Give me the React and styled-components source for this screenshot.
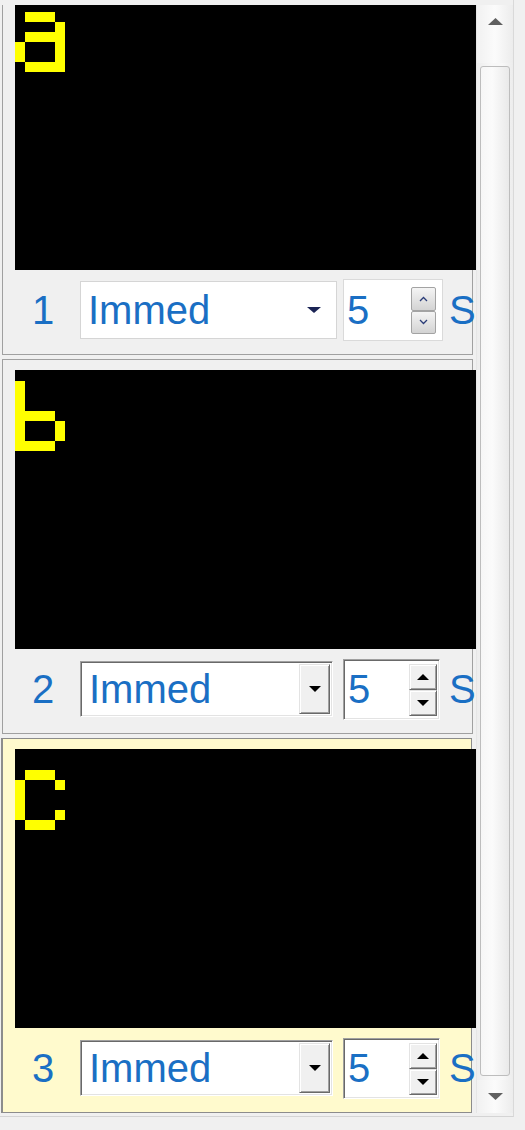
import React, { useLayoutEffect, useRef } from 'react';
import styled, { createGlobalStyle, css } from 'styled-components';

const GlobalStyle = createGlobalStyle`
  html, body {
    margin: 0;
    padding: 0;
    background: #f0f0f0;
  }
  body {
    font-family: "Liberation Sans", Arial, sans-serif;
  }
`;

const sunken = css`
  border: 1px solid;
  border-color: #a0a0a0 #ffffff #ffffff #a0a0a0;
  box-shadow: inset 1px 1px 0 #696969, inset -1px -1px 0 #e3e3e3;
`;

const raised = css`
  border: 1px solid;
  border-color: #e3e3e3 #696969 #696969 #e3e3e3;
  box-shadow: inset 1px 1px 0 #ffffff, inset -1px -1px 0 #a0a0a0;
`;

const Styles = {
  Frame: styled.div`
    display: flex;
    width: 514px;
    height: 1117px;
    box-sizing: border-box;
    padding: 5px 0 3px 0;
    border-right: 1px solid #d9d9d9;
    border-bottom: 1px solid #d4d4d4;
    background: #f0f0f0;
  `,
  Viewport: styled.div`
    width: 476px;
    height: 100%;
    overflow: hidden;
    flex-shrink: 0;
  `,
  PanelList: styled.div`
    display: flex;
    flex-direction: column;
    gap: 4px;
    padding: 0 0 3px 2px;
  `,
  Panel: styled.div`
    width: 471px;
    box-sizing: border-box;
    padding: 10px 0 13px 12px;
    border: 1px solid #a0a0a0;
    background: ${props => (props.$selected ? '#fffacd' : '#f0f0f0')};
    ${props => props.$selected && css`
      border-color: #8c8c8c;
      border-left: 2px solid #8c8c8c;
      margin-left: -1px;
    `}
  `,
  Display: styled.div`
    width: 461px;
    height: 279px;
    box-sizing: border-box;
    padding-top: 11px;
    background: #000;
    svg { display: block; }
  `,
  Row: styled.div`
    display: flex;
    align-items: center;
    height: 62px;
    margin-top: 9px;
    width: 461px;
    font-size: 40px;
    color: #1a6fc4;
    white-space: nowrap;
  `,
  IndexLabel: styled.span`
    width: 65px;
    box-sizing: border-box;
    padding-left: 17px;
    flex-shrink: 0;
  `,
  Combo: styled.div`
    display: flex;
    align-items: center;
    flex-shrink: 0;
    box-sizing: border-box;
    background: #fff;
    ${props => (props.$classic
      ? css`
        width: 253px;
        height: 56px;
        padding: 2px 2px 2px 8px;
        ${sunken}
      `
      : css`
        width: 257px;
        height: 58px;
        padding: 0 15px 0 7px;
        border: 1px solid #d5d5d5;
      `)}
  `,
  ComboText: styled.span`
    flex: 1;
  `,
  DropButton: styled.div`
    width: 31px;
    height: 100%;
    box-sizing: border-box;
    display: flex;
    align-items: center;
    justify-content: center;
    background: #f0f0f0;
    ${raised}
  `,
  Spin: styled.div`
    display: flex;
    align-items: center;
    flex-shrink: 0;
    box-sizing: border-box;
    background: #fff;
    ${props => (props.$classic
      ? css`
        width: 97px;
        height: 61px;
        margin-left: 10px;
        padding: 4px 2px 3px 4px;
        ${sunken}
      `
      : css`
        width: 100px;
        height: 62px;
        margin-left: 6px;
        padding: 7px 6px 6px 3px;
        border: 1px solid #dadada;
      `)}
  `,
  SpinText: styled.span`
    flex: 1;
  `,
  SpinButtons: styled.div`
    display: flex;
    flex-direction: column;
    width: ${props => (props.$classic ? '28px' : '25px')};
    height: 100%;
  `,
  SpinButton: styled.div`
    flex: 1;
    display: flex;
    align-items: center;
    justify-content: center;
    box-sizing: border-box;
    ${props => (props.$classic
      ? css`
        background: #f0f0f0;
        ${raised}
      `
      : css`
        border: 1px solid #a3a3a3;
        border-radius: 2px;
        background: linear-gradient(#f4f4f4, #d3d3d3);
      `)}
  `,
  Tail: styled.span`
    flex-shrink: 0;
    margin-left: ${props => (props.$classic ? '9px' : '6px')};
  `,
  ScrollBar: styled.div`
    display: flex;
    flex-direction: column;
    width: 37px;
    height: 100%;
    box-sizing: border-box;
    border-left: 1px solid #e6e6e6;
    background: linear-gradient(to right, #ededed, #f8f8f8 40%, #f8f8f8 70%, #ececec);
  `,
  ScrollButton: styled.div`
    display: flex;
    justify-content: center;
    align-items: ${props => (props.$top ? 'flex-start' : 'center')};
    height: ${props => props.$height}px;
    padding-top: ${props => (props.$top ? '13px' : '0')};
    box-sizing: border-box;
    background: linear-gradient(to right, #f1f1f1, #fbfbfb 50%, #ececec);
    svg { display: block; }
  `,
  Thumb: styled.div`
    flex: 1;
    margin: 3px 3px 4px 3px;
    border: 1px solid #bdbdbd;
    border-radius: 3px;
    background: linear-gradient(to right, #f6f6f6, #fbfbfb 40%, #e9e9e9);
  `
};

const glyphs = {
  a: ['.....', '.###.', '....#', '.####', '#...#', '#...#', '.####'],
  b: ['#....', '#....', '#....', '####.', '#...#', '#...#', '####.'],
  c: ['.....', '.###.', '#...#', '#....', '#....', '#...#', '.###.']
};

const CELL = 10;

// one path for the lit LEDs of a 5x7 glyph
const glyphPath = (char) => {
  let d = '';
  glyphs[char].forEach((line, row) => {
    line.split('').forEach((dot, col) => {
      if (dot === '#') {
        d += `M${col * CELL} ${row * CELL}h${CELL}v${CELL}h-${CELL}z`;
      }
    });
  });
  return d;
};

const LedGlyph = ({ char }) => (
  <svg width={5 * CELL} height={7 * CELL} viewBox={`0 0 ${5 * CELL} ${7 * CELL}`} shapeRendering="crispEdges">
    <path d={glyphPath(char)} fill="#ffff00" />
  </svg>
);

const Triangle = ({ up, width, height, color }) => (
  <svg width={width} height={height} viewBox={`0 0 ${width} ${height}`}>
    <polygon
      points={up
        ? `0,${height} ${width},${height} ${width / 2},0`
        : `0,0 ${width},0 ${width / 2},${height}`}
      fill={color}
    />
  </svg>
);

const Chevron = ({ up }) => (
  <svg width="9" height="6" viewBox="0 0 9 6">
    <polyline
      points={up ? '1,5 4.5,1.5 8,5' : '1,1 4.5,4.5 8,1'}
      fill="none"
      stroke="#2a3c78"
      strokeWidth="1.3"
    />
  </svg>
);

const panels = [
  { index: 1, char: 'a', classic: false, selected: false },
  { index: 2, char: 'b', classic: true, selected: false },
  { index: 3, char: 'c', classic: true, selected: true }
];

const SlidePanel = ({ panel }) => {
  const classic = panel.classic;
  return (
    <Styles.Panel $selected={panel.selected}>
      <Styles.Display>
        <LedGlyph char={panel.char} />
      </Styles.Display>
      <Styles.Row>
        <Styles.IndexLabel>{panel.index}</Styles.IndexLabel>
        <Styles.Combo $classic={classic}>
          <Styles.ComboText>Immed</Styles.ComboText>
          {classic
            ? (
              <Styles.DropButton>
                <Triangle width={12} height={6} color="#000" />
              </Styles.DropButton>
            )
            : <Triangle width={14} height={6} color="#1b2455" />}
        </Styles.Combo>
        <Styles.Spin $classic={classic}>
          <Styles.SpinText>5</Styles.SpinText>
          <Styles.SpinButtons $classic={classic}>
            <Styles.SpinButton $classic={classic}>
              {classic ? <Triangle up width={12} height={6} color="#000" /> : <Chevron up />}
            </Styles.SpinButton>
            <Styles.SpinButton $classic={classic}>
              {classic ? <Triangle width={12} height={6} color="#000" /> : <Chevron />}
            </Styles.SpinButton>
          </Styles.SpinButtons>
        </Styles.Spin>
        <Styles.Tail $classic={classic}>S</Styles.Tail>
      </Styles.Row>
    </Styles.Panel>
  );
};

const App = () => {
  const viewportRef = useRef(null);

  useLayoutEffect(() => {
    if (viewportRef.current) {
      viewportRef.current.scrollTop = 25;
    }
  }, []);

  return (
    <>
      <GlobalStyle />
      <Styles.Frame>
        <Styles.Viewport ref={viewportRef}>
          <Styles.PanelList>
            {panels.map(panel => (
              <SlidePanel key={panel.index} panel={panel} />
            ))}
          </Styles.PanelList>
        </Styles.Viewport>
        <Styles.ScrollBar>
          <Styles.ScrollButton $top $height={58}>
            <Triangle up width={15} height={7} color="#606060" />
          </Styles.ScrollButton>
          <Styles.Thumb />
          <Styles.ScrollButton $height={33}>
            <Triangle width={15} height={7} color="#606060" />
          </Styles.ScrollButton>
        </Styles.ScrollBar>
      </Styles.Frame>
    </>
  );
};

export default App;
